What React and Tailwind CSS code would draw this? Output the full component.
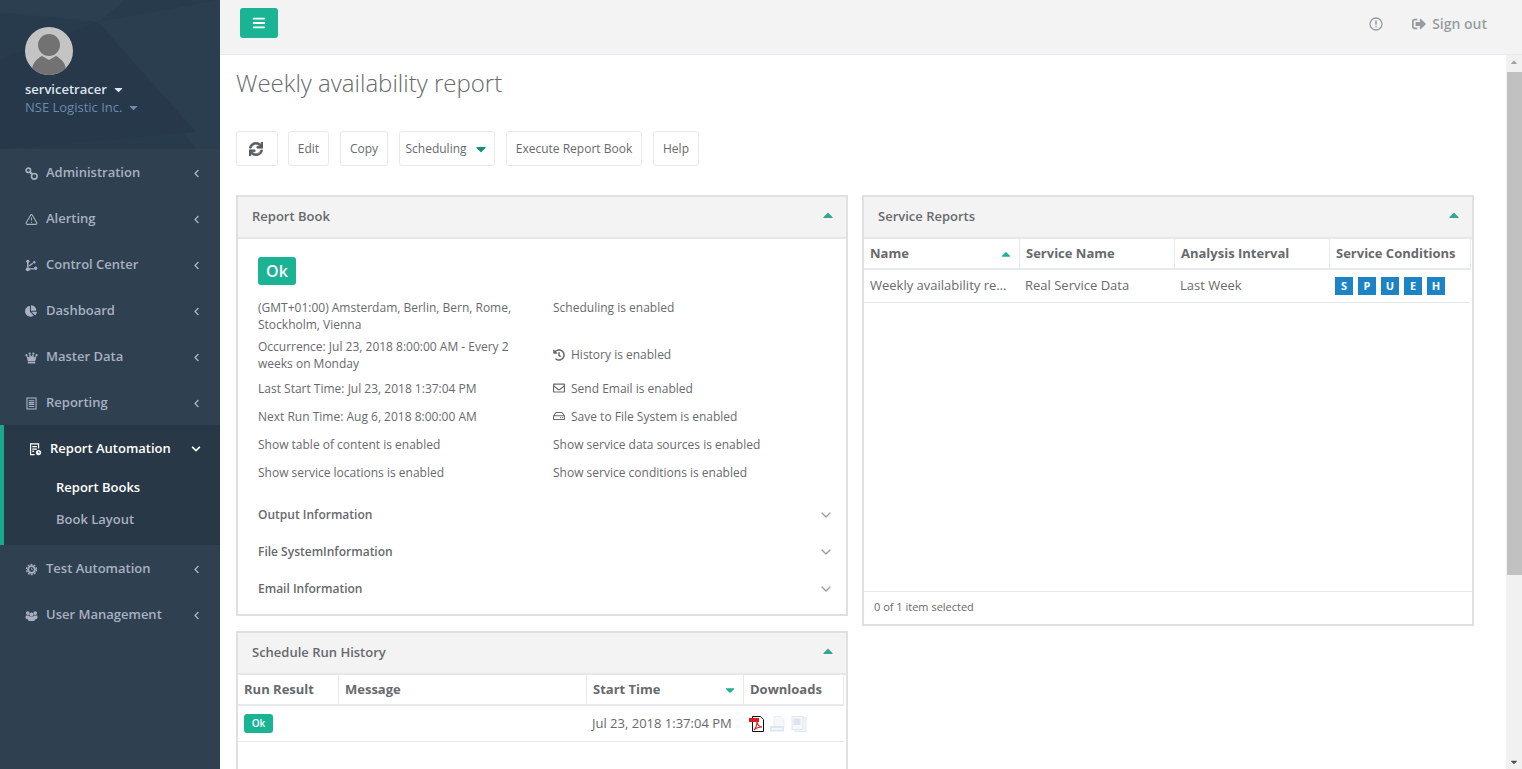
import {
  FaBars,
  FaCaretDown,
  FaCaretUp,
  FaChartPie,
  FaChevronDown,
  FaChevronLeft,
  FaHistory,
  FaRegEnvelope,
  FaRegHdd,
  FaSignOutAlt,
  FaSync,
} from "react-icons/fa";
import { ChevronDown, TriangleAlert } from "lucide-react";

const ChainIcon = () => (
  <svg viewBox="0 0 14 14" className="w-[13px] h-[13px]" fill="none" stroke="currentColor" strokeWidth="1.8">
    <circle cx="3.6" cy="3.6" r="2.4" />
    <circle cx="10" cy="10" r="3" />
    <path d="M5.4 5.4l2.4 2.4" strokeWidth="2.2" />
  </svg>
);

const ControlIcon = () => (
  <svg viewBox="0 0 14 14" className="w-[13px] h-[13px]" fill="currentColor">
    <circle cx="3" cy="2.5" r="1.8" />
    <circle cx="3" cy="11" r="2.2" />
    <circle cx="11.5" cy="10" r="1.8" />
    <circle cx="10" cy="3.5" r="1.3" />
    <path d="M2.2 3h1.6v6h-1.6zM4 10h6v1.4H4zM4 7l4-3 .8 1-4 3z" />
  </svg>
);

const CrownIcon = () => (
  <svg viewBox="0 0 14 14" className="w-[13px] h-[13px]" fill="currentColor">
    <circle cx="1.6" cy="4.5" r="1.2" />
    <circle cx="5" cy="2.8" r="1.2" />
    <circle cx="9" cy="2.8" r="1.2" />
    <circle cx="12.4" cy="4.5" r="1.2" />
    <path d="M1.5 5l3 2 .5-4 2 3 2-3 .5 4 3-2-1.5 6h-8z" />
    <rect x="3" y="11.6" width="8" height="1.8" />
  </svg>
);

const ListIcon = () => (
  <svg viewBox="0 0 14 14" className="w-[13px] h-[13px]" fill="none" stroke="currentColor" strokeWidth="1.2">
    <rect x="2.1" y="1.1" width="9.8" height="11.8" />
    <path d="M4 4h6M4 6h6M4 8h6M4 10.2h6" />
  </svg>
);

const TestIcon = () => (
  <svg viewBox="0 0 14 14" className="w-[13px] h-[13px]" fill="none" stroke="currentColor">
    <circle cx="7" cy="7" r="5.4" strokeWidth="1.4" strokeDasharray="2 1.4" />
    <circle cx="7" cy="7" r="3.6" strokeWidth="2" />
    <path d="M7 5.6V7h1.3" strokeWidth="0.9" />
  </svg>
);

const GroupIcon = () => (
  <svg viewBox="0 0 14 14" className="w-[13px] h-[13px]" fill="currentColor">
    <circle cx="3" cy="4.4" r="2" />
    <circle cx="11" cy="4.4" r="2" />
    <circle cx="7" cy="6" r="2.2" />
    <path d="M1 7h3l1 1h4l1-1h3c.6 1 .6 2.6 0 3.4L11 11l-1 2H4l-1-2-2-.6C.4 9.6.4 8 1 7z" />
  </svg>
);

const ReportAutoIcon = () => (
  <svg viewBox="0 0 14 14" className="w-[13px] h-[13px]" fill="none" stroke="currentColor" strokeWidth="1.3">
    <path d="M6 12.5H1.7V1h8.6v5" />
    <path d="M3.5 4h5M3.5 6.5h5M3.5 9h2" />
    <circle cx="10.3" cy="10.3" r="2.8" fill="currentColor" stroke="none" />
    <path d="M10.3 9v1.5h1.2" stroke="#293846" strokeWidth="0.9" />
  </svg>
);

const InfoIcon = () => (
  <svg viewBox="0 0 14 14" className="w-[14px] h-[14px]" fill="none" stroke="currentColor">
    <circle cx="7" cy="7" r="6" strokeWidth="1.3" />
    <path d="M7 3.5v4.2M7 9.2v1.4" strokeWidth="1.6" />
  </svg>
);

const Avatar = () => (
  <svg viewBox="0 0 48 48" className="w-12 h-12 rounded-full">
    <rect width="48" height="48" fill="#c4c4c4" />
    <circle cx="24" cy="18" r="11" fill="#727272" />
    <path d="M7 42c1-7 6-11 10-13l7 4 7-4c4 2 9 6 10 13l-6 6H12z" fill="#727272" />
  </svg>
);

const PdfIcon = () => (
  <svg viewBox="0 0 16 16" className="w-4 h-4">
    <path d="M3.5.5h8l3 3v12h-11z" fill="#fff" stroke="#111" />
    <rect x="0" y="2" width="10" height="4" fill="#e01b1b" />
    <path d="M5 14c2-2 3-6 3-9 0 3 2 6 5 6-3 0-6 1-8 3z" fill="none" stroke="#e01b1b" strokeWidth="1.1" />
  </svg>
);

const HtmlIcon = () => (
  <svg viewBox="0 0 16 16" className="w-4 h-4">
    <path d="M4 .5h7l3 3V11H4z" fill="#f6f7f9" stroke="#eceff3" />
    <rect x="0" y="10" width="14" height="5.5" fill="#dbe7f1" />
    <rect x="1.5" y="12" width="11" height="1.6" fill="#f7fafc" />
  </svg>
);

const WordIcon = () => (
  <svg viewBox="0 0 16 16" className="w-4 h-4">
    <rect x="4" y="1.5" width="11" height="14" fill="#f1f4f9" stroke="#e4e9f1" />
    <rect x="1" y="0.5" width="11" height="13" fill="#f5f7fb" stroke="#e1e7f0" />
    <rect x="2.5" y="2.5" width="7" height="6.5" fill="#dfe4f0" />
  </svg>
);

const menuItems = [
  { label: "Administration", icon: <ChainIcon /> },
  { label: "Alerting", icon: <TriangleAlert size={13} strokeWidth={2} /> },
  { label: "Control Center", icon: <ControlIcon /> },
  { label: "Dashboard", icon: <FaChartPie size={12} /> },
  { label: "Master Data", icon: <CrownIcon /> },
  { label: "Reporting", icon: <ListIcon /> },
];

const MenuRow = ({ label, icon }) => (
  <div className="h-[46px] flex items-center pl-[25px] pr-[19px] pt-[2px] text-[13px] font-semibold text-[#a7b1c2]">
    <span className="w-[21px] flex items-center">{icon}</span>
    <span className="flex-1">{label}</span>
    <FaChevronLeft size={9} />
  </div>
);

const Sidebar = () => (
  <aside className="w-[220px] shrink-0 bg-[#2f4050] h-full">
    <div className="relative h-[149px] bg-[#283b4c] overflow-hidden pl-[25px] pt-[27px]">
      <svg className="absolute inset-0 w-full h-full" viewBox="0 0 220 149" preserveAspectRatio="none">
        <path d="M0 0h125L98 22 0 12z" fill="#2b3f50" />
        <path d="M98 22l122-22v149h-24z" fill="#2b3e4f" />
        <path d="M98 22L196 132 0 149V60z" fill="#26384a" />
      </svg>
      <div className="relative">
        <Avatar />
        <div className="mt-[5px] flex items-center gap-[5px] text-[13px] leading-[18px] font-semibold text-[#dfe4ed]">
          servicetracer
          <FaCaretDown size={13} />
        </div>
        <div className="flex items-center gap-[5px] text-[13px] leading-[18px] text-[#6a8bab]">
          NSE Logistic Inc.
          <FaCaretDown size={13} />
        </div>
      </div>
    </div>
    {menuItems.map((item) => (
      <MenuRow key={item.label} {...item} />
    ))}
    <div className="h-[120px] bg-[#293846] border-l-4 border-[#19aa8d]">
      <div className="h-[46px] flex items-center pl-[25px] pr-[19px] pt-[2px] text-[13px] font-semibold text-white">
        <span className="w-[21px] flex items-center">
          <ReportAutoIcon />
        </span>
        <span className="flex-1">Report Automation</span>
        <FaChevronDown size={10} />
      </div>
      <div className="h-8 flex items-center pl-[52px] pt-[2px] text-[13px] font-semibold text-white">Report Books</div>
      <div className="h-8 flex items-center pl-[52px] pt-[2px] text-[13px] font-semibold text-[#a7b1c2]">Book Layout</div>
    </div>
    <MenuRow label="Test Automation" icon={<TestIcon />} />
    <MenuRow label="User Management" icon={<GroupIcon />} />
  </aside>
);

const TopBar = () => (
  <header className="h-[55px] shrink-0 bg-[#f3f3f4] border-b border-[#e7eaec] flex items-start pl-5 pr-[35px]">
    <button className="mt-2 w-[38px] h-[30px] rounded-[3px] bg-[#1ab394] text-white flex items-center justify-center">
      <FaBars size={14} />
    </button>
    <div className="ml-auto h-12 flex items-center text-[#999c9e] text-sm font-semibold">
      <InfoIcon />
      <span className="ml-[29px] flex items-center gap-[6px]">
        <FaSignOutAlt size={14} />
        Sign out
      </span>
    </div>
  </header>
);

const ToolButton = ({ children, className = "" }) => (
  <button
    className={`h-[35px] border border-[#e7eaec] rounded-[3px] bg-white text-xs text-[#676a6c] flex items-center justify-center ${className}`}
  >
    {children}
  </button>
);

const Toolbar = () => (
  <div className="flex gap-[11px] mt-8">
    <ToolButton className="w-[42px] mr-[-1px]">
      <FaSync size={14} stroke="currentColor" strokeWidth={24} className="text-[#5a5d5f] -ml-[2px]" />
    </ToolButton>
    <ToolButton className="w-[41px]">Edit</ToolButton>
    <ToolButton className="w-[48px]">Copy</ToolButton>
    <ToolButton className="w-[96px] gap-[6px]">
      Scheduling
      <FaCaretDown size={16} className="text-[#148f76]" />
    </ToolButton>
    <ToolButton className="w-[136px]">Execute Report Book</ToolButton>
    <ToolButton className="w-[46px]">Help</ToolButton>
  </div>
);

const Panel = ({ title, children, className = "" }) => (
  <section className={`w-[612px] border-2 border-[#e0e0e0] bg-white ${className}`}>
    <div className="h-[42px] bg-[#f3f3f4] border-b-2 border-[#e7e7e7] flex items-center pl-[14px] pr-[10px] text-[13px] font-semibold text-[#676a6c]">
      <span className="flex-1">{title}</span>
      <FaCaretUp size={16} className="text-[#36a78f] -mt-1" />
    </div>
    {children}
  </section>
);

const Detail = ({ h, left, right, icon, top }) => (
  <div className={`flex ${h}`}>
    <div className="w-[295px] pr-[25px] self-center leading-[17px]">{left}</div>
    <div className={`flex gap-[6px] leading-[17px] ${top ? "pt-[3px]" : "items-center"}`}>
      {icon}
      <span>{right}</span>
    </div>
  </div>
);

const Accordion = ({ title }) => (
  <div className="h-[37px] flex items-center text-xs font-semibold text-[#676a6c]">
    <span className="flex-1">{title}</span>
    <ChevronDown size={16} strokeWidth={2} className="text-[#9a9c9e] -mr-[2px]" />
  </div>
);

const ReportBook = () => (
  <Panel title="Report Book" className="h-[421px]">
    <div className="pl-5 pr-[14px] pt-[18px] text-xs text-[#676a6c]">
      <div className="w-[38px] h-7 mb-[11px] rounded-[3px] bg-[#1ab394] text-white text-base font-semibold flex items-center justify-center">
        Ok
      </div>
      <Detail
        h="h-[39px]"
        top
        left="(GMT+01:00) Amsterdam, Berlin, Bern, Rome, Stockholm, Vienna"
        right="Scheduling is enabled"
      />
      <Detail
        h="h-[39px]"
        left="Occurrence: Jul 23, 2018 8:00:00 AM - Every 2 weeks on Monday"
        right="History is enabled"
        icon={<FaHistory size={12} />}
      />
      <Detail
        h="h-7"
        left="Last Start Time: Jul 23, 2018 1:37:04 PM"
        right="Send Email is enabled"
        icon={<FaRegEnvelope size={12} />}
      />
      <Detail
        h="h-7"
        left="Next Run Time: Aug 6, 2018 8:00:00 AM"
        right="Save to File System is enabled"
        icon={<FaRegHdd size={12} />}
      />
      <Detail h="h-7" left="Show table of content is enabled" right="Show service data sources is enabled" />
      <Detail h="h-7" left="Show service locations is enabled" right="Show service conditions is enabled" />
      <div className="mt-[10px]">
        <Accordion title="Output Information" />
        <Accordion title="File SystemInformation" />
        <Accordion title="Email Information" />
      </div>
    </div>
  </Panel>
);

const Th = ({ w, children, caret }) => (
  <div
    className={`${w} shrink-0 h-full flex items-center px-[6px] border-r border-[#e7eaec] text-[13px] font-bold text-[#676a6c]`}
  >
    <span className="flex-1">{children}</span>
    {caret}
  </div>
);

const ServiceReports = () => (
  <Panel title="Service Reports" className="h-[431px] flex flex-col">
    <div className="h-[31px] shrink-0 flex border-b-2 border-[#e7eaec] w-[607px]">
      <Th w="w-[156px]" caret={<FaCaretUp size={14} className="text-[#1ab394]" />}>
        Name
      </Th>
      <Th w="w-[155px]">Service Name</Th>
      <Th w="w-[155px]">Analysis Interval</Th>
      <Th w="w-[141px]">Service Conditions</Th>
    </div>
    <div className="h-[33px] shrink-0 flex items-center border-b border-[#e7eaec] w-[606px] text-[13px] text-[#676a6c]">
      <span className="w-[155px] pl-[6px] pr-[9px] truncate">Weekly availability report</span>
      <span className="w-[155px] pl-[6px]">Real Service Data</span>
      <span className="w-[155px] pl-[6px]">Last Week</span>
      <span className="pl-[6px] flex gap-[5px]">
        {["S", "P", "U", "E", "H"].map((c) => (
          <span
            key={c}
            className="w-[18px] h-[18px] bg-[#1c84c6] text-white text-[11px] font-bold flex items-center justify-center"
          >
            {c}
          </span>
        ))}
      </span>
    </div>
    <div className="flex-1" />
    <div className="h-[33px] border-t border-[#e7eaec] flex items-center pl-[10px] pb-[2px] text-[11px] text-[#676a6c]">
      0 of 1 item selected
    </div>
  </Panel>
);

const RunHistory = () => (
  <Panel title="Schedule Run History" className="mt-[15px] h-[300px]">
    <div className="h-[31px] flex border-b-2 border-[#e7eaec] w-[606px]">
      <Th w="w-[101px]">Run Result</Th>
      <Th w="w-[248px]">Message</Th>
      <Th w="w-[157px]" caret={<FaCaretDown size={14} className="text-[#1ab394]" />}>
        Start Time
      </Th>
      <Th w="w-[100px]">Downloads</Th>
    </div>
    <div className="h-[36px] flex items-center border-b border-[#e7eaec] w-[606px] text-[13px] text-[#676a6c]">
      <span className="w-[349px] pl-[6px]">
        <span className="w-[29px] h-[19px] rounded-[3px] bg-[#1ab394] text-white text-[10px] font-semibold flex items-center justify-center">
          Ok
        </span>
      </span>
      <span className="w-[157px] pl-[5px]">Jul 23, 2018 1:37:04 PM</span>
      <span className="pl-[5px] flex gap-[5px]">
        <PdfIcon />
        <HtmlIcon />
        <WordIcon />
      </span>
    </div>
  </Panel>
);

const Scrollbar = () => (
  <div className="w-4 shrink-0 bg-[#f1f1f1] flex flex-col items-center">
    <FaCaretUp size={10} className="text-[#a3a3a3] mt-[2px] mb-[5px]" />
    <div className="w-[15px] h-[503px] bg-[#c1c1c1]" />
    <FaCaretDown size={10} className="text-[#505050] mt-auto mb-[2px]" />
  </div>
);

export default function App() {
  return (
    <div className="h-screen flex overflow-hidden bg-white font-['Open_Sans',sans-serif] text-[#676a6c]">
      <Sidebar />
      <main className="flex-1 min-w-0 flex flex-col">
        <TopBar />
        <div className="flex-1 min-h-0 flex">
          <div className="flex-1 min-w-0 overflow-hidden pl-4">
            <h1 className="mt-3 text-2xl leading-8 font-light text-[#676a6c]">Weekly availability report</h1>
            <Toolbar />
            <div className="flex gap-[14px] mt-[29px]">
              <div>
                <ReportBook />
                <RunHistory />
              </div>
              <ServiceReports />
            </div>
          </div>
          <Scrollbar />
        </div>
      </main>
    </div>
  );
}
